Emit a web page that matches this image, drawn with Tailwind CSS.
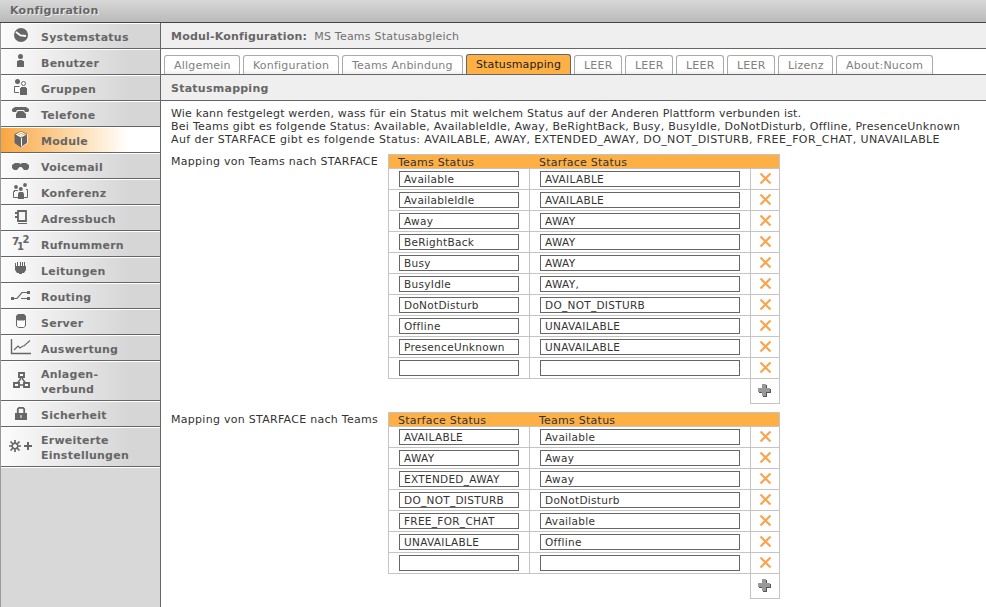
<!DOCTYPE html>
<html lang="de">
<head>
<meta charset="utf-8">
<title>Konfiguration</title>
<script src="https://cdn.jsdelivr.net/npm/@tailwindcss/browser@4"></script>
</head>
<body class="w-[986px] h-[607px] overflow-hidden flex flex-col bg-white font-['DejaVu_Sans',Verdana,sans-serif] text-[11px] leading-[13px] tracking-[0.25px] text-[#333]">
<header class="h-[23px] shrink-0 border-b border-[#444] bg-linear-to-b from-[#d8d8d8] to-[#bababa] pl-[10px] pt-[4px] font-bold text-[#666] [text-shadow:1px_1px_0_#eee]">Konfiguration</header>
<div class="flex flex-1 min-h-0">
  <aside class="w-[161px] shrink-0 flex flex-col border-l border-l-[#999] border-r border-r-[#666] bg-[#d8d8d8]">
    <nav id="nav" class="flex flex-col font-bold text-[#666] leading-[15px]"></nav>
    <div class="h-px bg-white"></div>
  </aside>
  <main class="flex-1 min-w-0 flex flex-col">
    <div class="h-[26px] shrink-0 border-b border-[#666] bg-[#efefef] pl-[10px] pt-[7px] text-[#707070] flex gap-[7px]"><b class="text-[#666] tracking-[0.2px]">Modul-Konfiguration:</b><span class="tracking-[0.22px]">MS Teams Statusabgleich</span></div>
    <div id="tabs" class="h-[26px] shrink-0 border-b border-[#666] pl-[3px] flex items-end gap-[3px]"></div>
    <div class="h-[26px] shrink-0 border-b border-[#666] bg-[#efefef] pl-[10px] pt-[7px] font-bold text-[#666]">Statusmapping</div>
    <div class="pl-[10px] pt-[6px] whitespace-nowrap">
      <p class="tracking-[0.2px]">Wie kann festgelegt werden, wass für ein Status mit welchem Status auf der Anderen Plattform verbunden ist.</p>
      <p class="tracking-[0.263px]">Bei Teams gibt es folgende Status: Available, AvailableIdle, Away, BeRightBack, Busy, BusyIdle, DoNotDisturb, Offline, PresenceUnknown</p>
      <p class="tracking-[0.385px]">Auf der STARFACE gibt es folgende Status: AVAILABLE, AWAY, EXTENDED_AWAY, DO_NOT_DISTURB, FREE_FOR_CHAT, UNAVAILABLE</p>
    </div>
    <section class="flex pl-[10px] mt-[8px]">
      <div class="w-[217px] pt-px tracking-[0.285px]">Mapping von Teams nach STARFACE</div>
      <div id="map1"></div>
    </section>
    <section class="flex pl-[10px] mt-[8px]">
      <div class="w-[217px] pt-px tracking-[0.285px]">Mapping von STARFACE nach Teams</div>
      <div id="map2"></div>
    </section>
  </main>
</div>
<script>
const nav = [
  ['Systemstatus', 24, '<circle cx="21" cy="35" r="7"/><path d="M16 32L20.5 35.500L26 36" stroke="#fff" stroke-width="1.800" fill="none"/>'],
  ['Benutzer', 24, '<circle cx="20.5" cy="56.5" r="2.5"/><path d="M17 61h1.500v-1h4v1H24v6h-7z"/>'],
  ['Gruppen', 24, '<circle cx="17.500" cy="81.500" r="2.500"/><circle cx="23.500" cy="83.500" r="2" fill="#fff" stroke="#666"/><path d="M19 92.500h-4.500v-6h5" fill="#fff" stroke="#666"/><path d="M20 88h1v-1h5v1h1v7h-7z"/>'],
  ['Telefone', 24, '<path d="M12 111v-2l3-2h11l3 2v2l-1 1h-3l-1-2h-7l-1 2h-3z"/><path d="M18 111h5l3 3v4H16v-4z"/>'],
  ['Module', 24, '<path d="M21 131l6.500 3v9L21 147.500 14.500 143v-9z"/><path d="M15.500 134.500l5.500-3 5.500 3-5.500 3z" fill="#fff"/><path d="M18 134.500h2m2 0h3M19.500 133.500h3M20 136h2" stroke="#f3b767" fill="none"/><path d="M21.500 138v8" stroke="#fff" fill="none"/><path d="M27.500 134v9L21 147.500" stroke="#fff" stroke-width=".8" fill="none"/>'],
  ['Voicemail', 24, '<path d="M12 165l3-2h4l1.500 1 1.500-1h4l3 2v3l-1.500 2h-3.500l-2.500-3h-2l-2.500 3H14l-2-2z"/>'],
  ['Konferenz', 24, '<circle cx="16" cy="187" r="1.900"/><circle cx="25" cy="185" r="1.900"/><circle cx="20.800" cy="189" r="2"/><path d="M15 191.500h-1.500v6h5M26 189.500h1.500v8h-4M14 190.500h4" fill="none" stroke="#666"/><path d="M18 194l1-2h4l1 2v5h-6z"/>'],
  ['Adressbuch', 24, '<path d="M18 211h8v10h-8z" fill="#f4f4f4" stroke="#666" stroke-width="1.800"/><path d="M15 212h3v2h-3zM15 216h3v2h-3zM18 223h9v1h-9z"/>'],
  ['Rufnummern', 24, '<g font-family="DejaVu Sans" font-weight="bold" letter-spacing="0"><text x="12" y="245" font-size="10.500">7</text><text x="17" y="250" font-size="10">1</text><text x="22.500" y="242.500" font-size="10">2</text></g>'],
  ['Leitungen', 24, '<path d="M15 263h1v3h1v-4h1v4h2v-4h1v4h1v-4h1v4h1v-4h1v4h1v4l-2 3h-2v1h-3v-1h-2l-2-3z"/>'],
  ['Routing', 24, '<path d="M11 297h3v3h-3zM27 291h3v3h-3zM27 297h3v3h-3z"/><path d="M13 298.500h4l5-6h6M21 298.500h7" fill="none" stroke="#666" stroke-width="1.200"/>'],
  ['Server', 24, '<path d="M16.500 317v9l2 1.500h5l2-1.500v-9l-2-2h-5z" fill="#fff" stroke="#666"/><path d="M16 316l2-2h6l2 2v3l-2 1.500h-6L16 319z"/>'],
  ['Auswertung', 24, '<path d="M11.500 339v14.500H31" fill="none" stroke="#666" stroke-width="1.400"/><path d="M14 350l4-4 2 2 3-2h1l6-5.500" fill="none" stroke="#666" stroke-width="1.100"/>'],
  ['Anlagen-<br>verbund', 38, '<path d="M19 373h5v4h-5zM14 383h5v4h-5zM24 383h5v4h-5z" fill="#fff" stroke="#666" stroke-width="1.900"/><path d="M20.500 377v2l-3 4M22.500 377v2l3 4M19 385h5" fill="none" stroke="#666" stroke-width="1.500"/>'],
  ['Sicherheit', 24, '<path d="M15 413h12v7H15z"/><path d="M17.800 413v-4l1.200-1.200h4l1.200 1.200v4" fill="none" stroke="#666" stroke-width="1.800"/><path d="M20.500 415h1v3h-1z" fill="#fff"/>'],
  ['Erweiterte<br>Einstellungen', 38, '<path d="M15 440v4M15 448v4M9 446h4M17 446h4M10.500 441.500l3 3M16.500 447.500l3 3M19.500 441.500l-3 3M13.500 447.500l-3 3" fill="none" stroke="#666" stroke-width="1.700"/><circle cx="15" cy="446" r="2.800" fill="none" stroke="#666" stroke-width="1.400"/><path d="M24 445h3v-3h2v3h3v2h-3v3h-2v-3h-3z"/>'],
];
let y = 24;
document.getElementById('nav').innerHTML = nav.map(([t, h, icon]) => {
  const bg = t === 'Module' ? 'from-[#f9a63a] via-[#fcd9a8] via-45% to-white to-80%' : 'from-[#fcfcfc] to-[#d6d6d6] to-80%';
  const pad = h === 24 ? 'pt-[6px]' : 'pt-[5px]';
  const s = `<div class="flex border-t border-t-white border-b border-b-[#666] bg-linear-to-r ${bg}">
    <svg class="shrink-0 block" width="40" height="${h}" viewBox="1 ${y} 40 ${h}" fill="#666">${icon}</svg>
    <span class="h-0 ${pad}">${t}</span></div>`;
  y += h + 2;
  return s;
}).join('');

const tabs = [['Allgemein', 76], ['Konfiguration', 96], ['Teams Anbindung', 121], ['Statusmapping', 105], ['LEER', 48], ['LEER', 48], ['LEER', 48], ['LEER', 48], ['Lizenz', 55], ['About:Nucom', 97]];
document.getElementById('tabs').innerHTML = tabs.map(([t, w]) => t === 'Statusmapping'
  ? `<div class="h-[20px] border border-b-0 border-[#666] rounded-t-[3px] bg-[#ffb045] pl-[9px] pt-[3px] tracking-[0.12px] text-[#222]" style="width:${w}px">${t}</div>`
  : `<div class="h-[19px] border border-b-0 border-[#aaa] rounded-t-[3px] bg-linear-to-b from-white from-75% to-[#eee] pl-[9px] pt-[3px] tracking-[0.2px] text-[#808080]" style="width:${w}px">${t}</div>`).join('');

const cross = '<svg width="13" height="12" viewBox="0 0 13 12"><path d="M1.500 .5L11.500 10.500M11.500 .5L1.500 10.500" stroke="#f9a550" stroke-width="2.200"/></svg>';
const plus = '<svg class="mr-px mb-[2px]" width="13" height="13" viewBox="0 0 13 13"><path d="M5 1h4v4h4v4H9v4H5V9H1V5h4z" fill="#555"/><path d="M4 0h4v4h4v4H8v4H4V8H0V4h4z" fill="#999"/></svg>';
const field = (v, w) => `<div class="h-[16px] border border-[#666] bg-white pl-[4px] text-[10.5px] leading-[15px] tracking-[0.3px]" style="width:${w}px">${v}</div>`;
function table(id, a, b, rows) {
  document.getElementById(id).innerHTML = `<div class="w-[392px] border border-b-0 border-[#c4c4c4]">
    <div class="h-[14px] border-b border-[#c4c4c4] bg-[#ffb045] flex pl-[9px] leading-[15px]"><span class="w-[141px]">${a}</span><span>${b}</span></div>
    ${rows.map(([l, r]) => `<div class="h-[21px] border-b border-[#c4c4c4] flex">
      <div class="w-[141px] border-r border-[#c4c4c4] pl-[10px] pt-[2px]">${field(l, 120)}</div>
      <div class="w-[221px] border-r border-[#c4c4c4] pl-[10px] pt-[2px]">${field(r, 200)}</div>
      <div class="flex-1 flex justify-center items-center">${cross}</div></div>`).join('')}
    </div>
    <div class="ml-auto w-[30px] h-[25px] border border-t-0 border-[#c4c4c4] flex justify-center items-center">${plus}</div>`;
}
table('map1', 'Teams Status', 'Starface Status', [['Available', 'AVAILABLE'], ['AvailableIdle', 'AVAILABLE'], ['Away', 'AWAY'], ['BeRightBack', 'AWAY'], ['Busy', 'AWAY'], ['BusyIdle', 'AWAY,'], ['DoNotDisturb', 'DO_NOT_DISTURB'], ['Offline', 'UNAVAILABLE'], ['PresenceUnknown', 'UNAVAILABLE'], ['', '']]);
table('map2', 'Starface Status', 'Teams Status', [['AVAILABLE', 'Available'], ['AWAY', 'Away'], ['EXTENDED_AWAY', 'Away'], ['DO_NOT_DISTURB', 'DoNotDisturb'], ['FREE_FOR_CHAT', 'Available'], ['UNAVAILABLE', 'Offline'], ['', '']]);
</script>
</body>
</html>
